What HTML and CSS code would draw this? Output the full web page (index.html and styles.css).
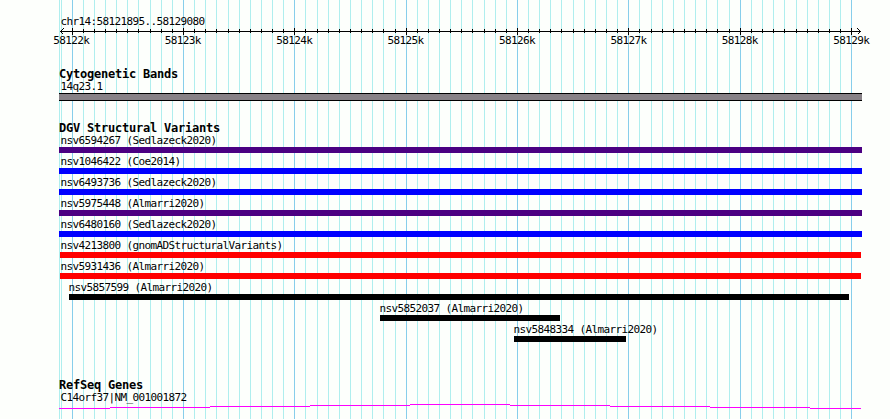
FILE: index.html
```
<!DOCTYPE html>
<html lang="en">
<head>
<meta charset="utf-8">
<title>chr14:58121895..58129080</title>
<link rel="stylesheet" href="styles.css">
</head>
<body>
<main class="browser">
  <svg class="grid" width="890" height="419" shape-rendering="crispEdges" aria-hidden="true">
    <path class="minor" d="M59.5 0v419M61.5 0v419M83.5 0v419M94.5 0v419M105.5 0v419M116.5 0v419M127.5 0v419M138.5 0v419M150.5 0v419M161.5 0v419M172.5 0v419M194.5 0v419M205.5 0v419M216.5 0v419M228.5 0v419M239.5 0v419M250.5 0v419M261.5 0v419M272.5 0v419M283.5 0v419M305.5 0v419M317.5 0v419M328.5 0v419M339.5 0v419M350.5 0v419M361.5 0v419M372.5 0v419M383.5 0v419M395.5 0v419M417.5 0v419M428.5 0v419M439.5 0v419M450.5 0v419M461.5 0v419M472.5 0v419M484.5 0v419M495.5 0v419M506.5 0v419M528.5 0v419M539.5 0v419M550.5 0v419M561.5 0v419M573.5 0v419M584.5 0v419M595.5 0v419M606.5 0v419M617.5 0v419M639.5 0v419M651.5 0v419M662.5 0v419M673.5 0v419M684.5 0v419M695.5 0v419M706.5 0v419M717.5 0v419M729.5 0v419M751.5 0v419M762.5 0v419M773.5 0v419M784.5 0v419M796.5 0v419M807.5 0v419M818.5 0v419M829.5 0v419M840.5 0v419"/>
    <path class="major" d="M72.5 0v419M183.5 0v419M294.5 0v419M406.5 0v419M517.5 0v419M628.5 0v419M740.5 0v419M851.5 0v419"/>
  </svg>

  <header class="ruler">
    <div class="label">chr14:58121895..58129080</div>
    <svg class="axis" width="890" height="8" viewBox="0 28 890 8" shape-rendering="crispEdges" aria-hidden="true">
      <path d="M60 31.5H861M72.5 28v7M183.5 28v7M294.5 28v7M406.5 28v7M517.5 28v7M628.5 28v7M740.5 28v7M851.5 28v7"/>
      <path d="M83.5 29v4M94.5 29v4M105.5 29v4M116.5 29v4M127.5 29v4M138.5 29v4M150.5 29v4M161.5 29v4M172.5 29v4M194.5 29v4M205.5 29v4M216.5 29v4M228.5 29v4M239.5 29v4M250.5 29v4M261.5 29v4M272.5 29v4M283.5 29v4M305.5 29v4M317.5 29v4M328.5 29v4M339.5 29v4M350.5 29v4M361.5 29v4M372.5 29v4M383.5 29v4M395.5 29v4M417.5 29v4M428.5 29v4M439.5 29v4M450.5 29v4M461.5 29v4M472.5 29v4M484.5 29v4M495.5 29v4M506.5 29v4M528.5 29v4M539.5 29v4M550.5 29v4M561.5 29v4M573.5 29v4M584.5 29v4M595.5 29v4M606.5 29v4M617.5 29v4M639.5 29v4M651.5 29v4M662.5 29v4M673.5 29v4M684.5 29v4M695.5 29v4M706.5 29v4M717.5 29v4M729.5 29v4M751.5 29v4M762.5 29v4M773.5 29v4M784.5 29v4M796.5 29v4M807.5 29v4M818.5 29v4M829.5 29v4M840.5 29v4"/>
      <path class="arrow" d="M63.5 28.5L60.5 31.5L63.5 34.5M857.5 28.5L860.5 31.5L857.5 34.5"/>
    </svg>
    <div class="ticks">
      <span>58122k</span><span>58123k</span><span>58124k</span><span>58125k</span><span>58126k</span><span>58127k</span><span>58128k</span><span>58129k</span>
    </div>
  </header>

  <section class="track cytobands">
    <h2>Cytogenetic Bands</h2>
    <div class="label">14q23.1</div>
    <div class="band"></div>
  </section>

  <section class="track variants">
    <h2>DGV Structural Variants</h2>
    <div class="feature"><div class="label">nsv6594267 (Sedlazeck2020)</div><div class="bar purple"></div></div>
    <div class="feature"><div class="label">nsv1046422 (Coe2014)</div><div class="bar blue"></div></div>
    <div class="feature"><div class="label">nsv6493736 (Sedlazeck2020)</div><div class="bar blue"></div></div>
    <div class="feature"><div class="label">nsv5975448 (Almarri2020)</div><div class="bar purple"></div></div>
    <div class="feature"><div class="label">nsv6480160 (Sedlazeck2020)</div><div class="bar blue"></div></div>
    <div class="feature"><div class="label">nsv4213800 (gnomADStructuralVariants)</div><div class="bar red"></div></div>
    <div class="feature"><div class="label">nsv5931436 (Almarri2020)</div><div class="bar red"></div></div>
    <div class="feature inset-a"><div class="label">nsv5857599 (Almarri2020)</div><div class="bar"></div></div>
    <div class="feature inset-b"><div class="label">nsv5852037 (Almarri2020)</div><div class="bar"></div></div>
    <div class="feature inset-c"><div class="label">nsv5848334 (Almarri2020)</div><div class="bar"></div></div>
  </section>

  <section class="track genes">
    <h2>RefSeq Genes</h2>
    <div class="label">C14orf37|NM_001001872</div>
    <svg class="intron" width="803" height="5" viewBox="59 404 803 5" shape-rendering="crispEdges" aria-hidden="true">
      <path d="M59 408.5H110M110 407.5H210M210 406.5H310M310 405.5H410M410 404.5H510M510 405.5H610M610 406.5H710M710 407.5H810M810 408.5H861"/>
    </svg>
  </section>
</main>
</body>
</html>
```
FILE: styles.css
```
body {
  margin: 0;
  background: #fdfffc;
  color: #000;
}

.browser {
  position: relative;
  width: 890px;
  height: 419px;
  overflow: hidden;
  font: 11px/12px "DejaVu Sans Mono", monospace;
  letter-spacing: -0.622px;
  white-space: nowrap;
}

.grid {
  position: absolute;
  inset: 0;
  z-index: -1;
}

.grid path,
.axis path,
.intron path {
  fill: none;
  stroke-width: 1;
}

.minor { stroke: #afeeee; }
.major { stroke: #87ceeb; }

.label {
  height: 13px;
  padding-top: 1px;
  box-sizing: border-box;
}

.ruler {
  display: flex;
  flex-direction: column;
  height: 68px;
  padding-top: 15px;
  box-sizing: border-box;
}

.ruler .label { padding-left: 60.4px; }
.axis { display: block; flex: none; }
.axis path { stroke: #000; }
.ticks {
  display: flex;
  justify-content: space-between;
  width: 816px;
  margin: -1px 0 0 53.3px;
}

.track {
  width: 803px;
  margin-left: 59px;
}

h2 {
  margin: 0;
  height: 12px;
  font-size: 12px;
  line-height: 12px;
  letter-spacing: -0.224px;
}

.track .label { padding-left: 1.4px; }

.cytobands { height: 54px; }

.band {
  height: 6px;
  background: #878186;
  border: solid #000;
  border-width: 1px 0;
}

.variants { height: 257px; }

.feature { height: 21px; }
.feature .label { height: 13px; }
.bar { height: 6px; background: #000; }
.purple { background: #4b0082; }
.blue { background: #00f; }
.red { background: #f00; margin: 0 1px; }

.inset-a { width: 780px; margin-left: 10px; }
.inset-b { width: 180px; margin-left: 321px; }
.inset-c { width: 112px; margin-left: 455px; }
.track .inset-a .label,
.track .inset-b .label,
.track .inset-c .label { padding-left: 0; margin-left: -0.6px; }

.intron { display: block; }
.intron path { stroke: #f0f; }
```
